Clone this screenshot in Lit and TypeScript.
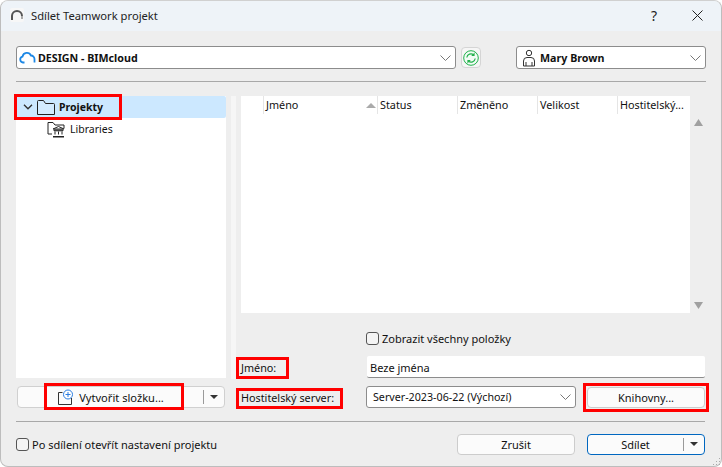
import { LitElement, html, css } from "lit";
import { customElement } from "lit/decorators.js";

const chevron = html`<svg class="chev" width="11" height="6" viewBox="0 0 11 6"><path d="M.5.5l5 5 5-5" fill="none" stroke="#777" stroke-width="1"/></svg>`;
const tri = html`<svg class="tri" width="8" height="4" viewBox="0 0 8 4"><path d="M0 0h8L4 4z" fill="#333"/></svg>`;

@customElement("app-root")
export class AppRoot extends LitElement {
  static styles = css`
    :host { display: block; width: 722px; height: 467px; position: relative; overflow: hidden; background: #fff;
      font-family: "Noto Sans", sans-serif; font-size: 11px; color: #111; }
    * { box-sizing: border-box; }
    .win { width: 722px; height: 467px; background: #eee; border: 1px solid #bdbdbd; border-top-color: #d0d0d0; border-radius: 8px; overflow: hidden; display: flex; flex-direction: column; }
    .title { height: 30px; flex: none; background: #eef3f8; display: flex; align-items: center; padding: 0 0 2px 9px; font-size: 11.2px; color: #222; }
    .title .name { margin-left: 7px; flex: 1; }
    .tbtn { width: 40px; display: flex; justify-content: center; align-items: center; }
    .tbtn.help { font-size: 14px; margin-right: 3px; }
    .tbtn.close { margin-right: 4px; }
    .body { flex: 1; padding: 15px 15px 0; display: flex; flex-direction: column; }
    .top { display: flex; height: 23px; }
    .sel { background: #fff; border: 1px solid #8c8c8c; border-radius: 3px; display: flex; align-items: center; position: relative; }
    .sel .chev { margin-left: auto; margin-right: 4px; }
    .bold { font-weight: 700; font-size: 10.7px; }
    .sel.cloud { width: 440px; padding-left: 2px; gap: 2px; }
    .sync { width: 20px; height: 21px; margin: 1px 35px 0 5px; border: 1px solid #d5d5d5; border-radius: 4px; background: #f6f6f6; display: flex; align-items: center; justify-content: center; }
    .sel.user { width: 190px; padding-left: 5px; gap: 4px; }
    hr { border: 0; border-top: 1px solid #a8a8a8; margin: 0; height: 0; }
    .h1 { margin-top: 12px; }
    .main { display: flex; margin-top: 14px; height: 312px; }
    .left { width: 210px; display: flex; flex-direction: column; flex: none; }
    .tree { height: 283px; background: #fff; }
    .row { display: flex; align-items: center; }
    .row.sel1 { height: 22px; background: #cce8ff; padding-left: 7px; gap: 4px; border-radius: 0 2px 2px 0; font-weight: 700; font-size: 10.5px; }
    .row.sub { height: 22px; padding-left: 31px; gap: 4px; font-size: 10.5px; }
    .splitbtn { margin: 8px 1px 0; height: 22px; border: 1px solid #d0d0d0; border-radius: 4px; background: #fbfbfb; display: flex; align-items: center; }
    .splitbtn .lbl { flex: 1; display: flex; align-items: center; justify-content: center; gap: 4px; font-size: 11.1px; }
    .split-r { width: 21px; height: 14px; border-left: 1px solid #9a9a9a; display: flex; align-items: center; justify-content: center; }
    .strip { width: 5px; margin-left: 5px; background: #f6f6f6; height: 283px; flex: none; }
    .right { margin-left: 5px; flex: 1; display: flex; flex-direction: column; min-width: 0; }
    .listwrap { display: flex; height: 217px; flex: none; }
    .list { width: 449px; background: #fff; }
    .head { display: grid; grid-template-columns: 22px 114px 80px 80px 80px 73px; height: 18px; background: #fff; }
    .head div { border-left: 1px solid #e5e5e5; padding: 0 0 1px 2px; display: flex; align-items: center; white-space: nowrap; position: relative; font-size: 10.8px; }
    .head div:first-child { border-left: 0; }
    .sort { margin-left: auto; margin-right: 1px; }
    .scroll { flex: 1; display: flex; flex-direction: column; align-items: center; justify-content: space-between; padding: 23px 0 4px; }
    .check { display: flex; align-items: center; gap: 3px; }
    .box { width: 13px; height: 13px; border: 1px solid #555; border-radius: 3px; background: #f4f4f4; flex: none; }
    .showall { margin: 18px 0 0 125px; height: 14px; }
    .form { display: grid; grid-template-columns: 125px 210px 11px 118px; row-gap: 8px; margin-top: 11px; align-items: center; }
    .form .lab { font-size: 10.8px; }
    .lab.first { padding-top: 1px; }
    .input { grid-column: 2 / 5; margin-left: 1px; height: 22px; background: #fff; border-bottom: 1px solid #8c8c8c; border-radius: 2px; padding: 1px 0 0 3px; display: flex; align-items: center; }
    .sel.server { height: 22px; padding-left: 6px; font-size: 10.7px; }
    .btn { height: 21px; border: 1px solid #ccc; border-radius: 4px; background: #fbfbfb; display: flex; align-items: center; justify-content: center; }
    .h2 { margin-top: 13px; margin-right: 1px; }
    .foot { display: flex; align-items: center; margin-top: 12px; height: 21px; padding-right: 1px; }
    .foot .check { flex: 1; }
    .foot .btn { width: 118px; }
    .foot .zr { margin-right: 12px; }
    .foot .primary { border: 1px solid #0067c0; position: relative; padding-right: 21px; }
    .primary .sep { position: absolute; right: 20px; top: 3px; height: 13px; border-left: 1px solid #9a9a9a; }
    .primary .tri { position: absolute; right: 6px; top: 7px; }
    .grip { position: absolute; right: 1px; bottom: 1px; }
    .red { position: absolute; border: 3px solid #f00; pointer-events: none; }
    .r1 { left: 14px; top: 94px; width: 108px; height: 26px; }
    .r2 { left: 44px; top: 383px; width: 140px; height: 27px; }
    .r3 { left: 236px; top: 357px; width: 53px; height: 22px; }
    .r4 { left: 236px; top: 388px; width: 107px; height: 21px; }
    .r5 { left: 583px; top: 383px; width: 126px; height: 29px; }
  `;

  render() {
    return html`
      <div class="win">
        <div class="title">
          <svg width="14" height="14" viewBox="0 0 14 14"><rect width="14" height="14" rx="2" fill="#f7f7f7"/><path d="M2 12V8a5 5 0 0 1 10 0" fill="none" stroke="#555" stroke-width="2"/><path d="M12 8v3" stroke="#aaa" stroke-width="2"/></svg>
          <span class="name">Sdílet Teamwork projekt</span>
          <span class="tbtn help">?</span>
          <span class="tbtn close"><svg width="11" height="11" viewBox="0 0 11 11"><path d="M.5.500l10 10M10.500.500l-10 10" stroke="#222" fill="none"/></svg></span>
        </div>
        <div class="body">
          <div class="top">
            <div class="sel cloud">
              <svg width="17" height="13" viewBox="0 0 17 13"><path d="M5.500 11.500H4A3 3 0 0 1 3.500 5.600 4.500 4.500 0 0 1 12 4.500a3.500 3.500 0 0 1 3.500 3.500v3.500" fill="none" stroke="#1e88e5" stroke-width="1.800"/></svg>
              <span class="bold">DESIGN - BIMcloud</span>${chevron}
            </div>
            <div class="sync">
              <svg width="16" height="16" viewBox="0 0 16 16"><circle cx="8" cy="8" r="7.300" fill="#f2fcf5" stroke="#22b14c" stroke-width="1"/><path d="M3.800 7.500a4.200 4.200 0 0 1 6.800-2.700M12.200 8.500a4.200 4.200 0 0 1-6.800 2.700" fill="none" stroke="#22b14c" stroke-width="1.200"/><path d="M11.600 2.600v3.400H8.200zM4.400 13.400V10h3.400z" fill="#22b14c"/></svg>
            </div>
            <div class="sel user">
              <svg width="14" height="18" viewBox="0 0 14 18"><circle cx="7" cy="4" r="2.700" fill="none" stroke="#333"/><path d="M1.500 17v-5a3.500 3.500 0 0 1 3.500-3.500h4a3.500 3.500 0 0 1 3.500 3.500v5zM4 13v4M10 13v4" fill="none" stroke="#333"/></svg>
              <span class="bold">Mary Brown</span>${chevron}
            </div>
          </div>
          <hr class="h1" />
          <div class="main">
            <div class="left">
              <div class="tree">
                <div class="row sel1">
                  <svg width="10" height="6" viewBox="0 0 10 6"><path d="M1 .8l4 4 4-4" fill="none" stroke="#333" stroke-width="1.400"/></svg>
                  <svg width="18" height="15" viewBox="0 0 18 15"><path d="M.5 14.500V1.500a1 1 0 0 1 1-1h5l2 3h8a1 1 0 0 1 1 1v10z" fill="#fff" fill-opacity=".15" stroke="#222"/></svg>
                  <span>Projekty</span>
                </div>
                <div class="row sub">
                  <svg width="19" height="17" viewBox="0 0 19 17"><path d="M5 13H1V1.500h5l2 2.500h9v3.500" fill="none" stroke="#222"/><path d="M6 8l5.500-2.500L17 8zM7 9h9v.8H7zM8 10.500v3M11.500 10.500v3M15 10.500v3" fill="none" stroke="#222"/><path d="M6 15h11v1.500H6z" fill="#222"/></svg>
                  <span>Libraries</span>
                </div>
              </div>
              <div class="splitbtn">
                <div class="lbl">
                  <svg width="18" height="17" viewBox="0 0 18 17"><path d="M1.500 3.500v12h13V9M1.500 3.500h4" fill="none" stroke="#333"/><circle cx="11" cy="5.500" r="4.500" fill="#fff" stroke="#2a7de1"/><path d="M11 3v5M8.500 5.500h5" stroke="#2a7de1"/></svg>
                  <span>Vytvořit složku...</span>
                </div>
                <div class="split-r">${tri}</div>
              </div>
            </div>
            <div class="strip"></div>
            <div class="right">
              <div class="listwrap">
                <div class="list">
                  <div class="head">
                    <div></div>
                    <div>Jméno<svg class="sort" width="10" height="6" viewBox="0 0 10 6"><path d="M0 6h10L5 1z" fill="#aaa"/></svg></div>
                    <div>Status</div><div>Změněno</div><div>Velikost</div><div>Hostitelský...</div>
                  </div>
                </div>
                <div class="scroll">
                  <svg width="9" height="7" viewBox="0 0 9 7"><path d="M0 7h9L4.500 0z" fill="#a0a0a0"/></svg>
                  <svg width="9" height="7" viewBox="0 0 9 7"><path d="M0 0h9L4.500 7z" fill="#a0a0a0"/></svg>
                </div>
              </div>
              <div class="check showall"><span class="box"></span><span>Zobrazit všechny položky</span></div>
              <div class="form">
                <span class="lab first">Jméno:</span>
                <div class="input">Beze jména</div>
                <span class="lab">Hostitelský server:</span>
                <div class="sel server"><span>Server-2023-06-22 (Výchozí)</span>${chevron}</div>
                <span></span>
                <div class="btn">Knihovny...</div>
              </div>
            </div>
          </div>
          <hr class="h2" />
          <div class="foot">
            <div class="check"><span class="box"></span><span>Po sdílení otevřít nastavení projektu</span></div>
            <div class="btn zr">Zrušit</div>
            <div class="btn primary">Sdílet<span class="sep"></span>${tri}</div>
          </div>
        </div>
      </div>
      <svg class="grip" width="9" height="9" viewBox="0 0 9 9"><path d="M7 1h1v1H7zM4 4h1v1H4zM7 4h1v1H7zM1 7h1v1H1zM4 7h1v1H4zM7 7h1v1H7z" fill="#aaa"/></svg>
      <div class="red r1"></div><div class="red r2"></div><div class="red r3"></div><div class="red r4"></div><div class="red r5"></div>
    `;
  }
}
